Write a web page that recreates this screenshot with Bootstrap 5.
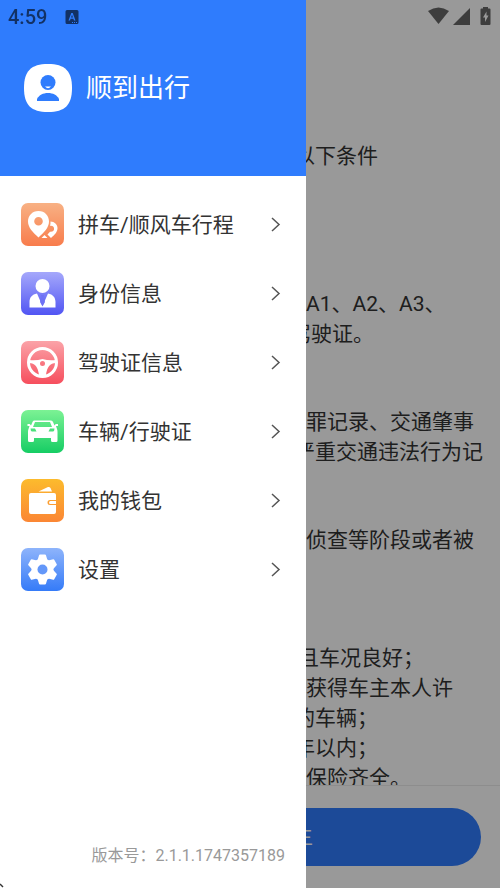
<!DOCTYPE html>
<html lang="zh-CN">
<head>
<meta charset="utf-8">
<meta name="viewport" content="width=device-width, initial-scale=1">
<title>顺到出行</title>
<link href="https://cdn.jsdelivr.net/npm/bootstrap@5.3.0/dist/css/bootstrap.min.css" rel="stylesheet">
<style>
:root { --drawer: 61.2vw; --brand: #2f7cfd; }
body { font-family: Roboto, "Noto Sans CJK SC", sans-serif; color: #333; background: #fff; }
.terms { padding: 141px 0 0 var(--drawer); font-size: 21px; line-height: 30px; }
.terms p, .terms h1 { margin: 0; font-size: 21px; line-height: 30px; font-weight: 400; white-space: nowrap; color: #333; }
.gap-title { margin-top: 118px; }
.gap-block { margin-top: 58px; }
.gap-group { margin-top: 88px; }
.under-8 { text-indent: -8px; }
.under-12 { text-indent: -12px; }
.under-16 { text-indent: -16px; }
.apply-bar { padding: 22px 19px; border-top: 1px solid #ebebeb; background: #fff; }
.apply-btn { height: 58px; font-size: 21px; color: #fff; background: var(--brand); }
.shade { background: rgba(0,0,0,.4); z-index: 10; }
.drawer { width: var(--drawer); z-index: 20; }
.profile { height: 176px; padding: 0 24px; gap: 14px; background: var(--brand); color: #fff; }
.avatar { width: 48px; height: 48px; }
.profile-name { font-size: 26px; line-height: 40px; font-weight: 400; }
.menu-list { padding-top: 14px; }
.menu-link { height: 69px; padding: 0 24px 0 21px; gap: 14px; color: #333; font-size: 21px; line-height: 30px; }
.menu-icon { width: 43px; height: 43px; }
.version { padding: 0 21px 20px; font-size: 16px; line-height: 24px; color: #999; }
.status { z-index: 30; height: 34px; padding: 0 8px; opacity: .6; color: #000; font-size: 20px; line-height: 34px; font-weight: 500; pointer-events: none; }
.corner { z-index: 30; }
</style>
<script src="https://cdn.jsdelivr.net/npm/bootstrap@5.3.0/dist/js/bootstrap.bundle.min.js"></script>
</head>
<body class="vh-100 overflow-hidden">
<div class="d-flex flex-column h-100">
  <main class="terms flex-grow-1 overflow-hidden">
    <h1 class="under-12">以下条件</h1>
    <section class="gap-title">
      <p>A1、A2、A3、</p>
      <p class="under-16">驾驶证。</p>
    </section>
    <section class="gap-block">
      <p>罪记录、交通肇事</p>
      <p class="under-12">严重交通违法行为记</p>
    </section>
    <section class="gap-block">
      <p>侦查等阶段或者被</p>
    </section>
    <section class="gap-group">
      <p class="under-8">且车况良好；</p>
      <p>获得车主本人许</p>
      <p class="under-12">的车辆；</p>
      <p class="under-12">年以内；</p>
      <p>保险齐全。</p>
    </section>
  </main>
  <footer class="apply-bar">
    <button type="button" class="apply-btn btn rounded-pill w-100 border-0">注册成为车主</button>
  </footer>
</div>

<div class="shade position-fixed top-0 start-0 w-100 h-100"></div>

<aside class="drawer position-fixed top-0 start-0 h-100 bg-white d-flex flex-column">
  <header class="profile d-flex align-items-center">
    <svg class="avatar flex-shrink-0" viewBox="0 0 48 48" aria-hidden="true">
      <path fill="#fff" d="M24 0C41 0 48 7 48 24S41 48 24 48 0 41 0 24 7 0 24 0Z"/>
      <circle cx="24" cy="18.500" r="7.500" fill="#2f7cfd"/>
      <path d="M21 22.500h6q-3 3.500-6 0Z" fill="#fff"/>
      <path fill="#2f7cfd" d="M13 37v-2c2-4 6-6 11-6s9 2 11 6v2Z"/>
    </svg>
    <span class="profile-name text-nowrap">顺到出行</span>
  </header>
  <nav class="menu-list flex-grow-1" aria-label="主菜单">
    <a href="#trips" class="menu-link d-flex align-items-center text-decoration-none">
      <svg class="menu-icon flex-shrink-0" viewBox="0 0 43 43" aria-hidden="true">
        <defs><linearGradient id="g1" x2="0" y2="1"><stop stop-color="#f8b184"/><stop offset="1" stop-color="#f87c4c"/></linearGradient></defs>
        <rect width="43" height="43" rx="7" fill="url(#g1)"/>
        <path fill="#fff" fill-rule="evenodd" d="M17.500 8C11 8 7 13 7 18.500c0 6 5 11 10.500 16 5.500-5 10.500-10 10.500-16C28 13 24 8 17.500 8Zm0 6a4.300 4.300 0 1 1 0 8.600 4.300 4.300 0 0 1 0-8.600Z"/>
        <path fill="#fff" d="M29.500 18.500c4 0 7 3 7 6.500 0 4-3 7-6.500 10l-3.500-3.500 2.500-2.800c3 .3 4.500-1.500 4-3.700-.5-1.500-2-2.500-4-2 .5-1.500.6-3 .5-4.500Z"/>
        <path fill="#fff" d="M23.500 32l3 3H20.500Z"/>
      </svg>
      <span class="flex-grow-1 text-nowrap">拼车/顺风车行程</span>
      <svg width="12" height="16" viewBox="0 0 12 16" fill="none" stroke="#555" stroke-width="1.500" aria-hidden="true"><path d="M2 1l7 6.500-7 6.500"/></svg>
    </a>
    <a href="#identity" class="menu-link d-flex align-items-center text-decoration-none">
      <svg class="menu-icon flex-shrink-0" viewBox="0 0 43 43" aria-hidden="true">
        <defs><linearGradient id="g2" x2="0" y2="1"><stop stop-color="#a5a8fb"/><stop offset="1" stop-color="#5155f3"/></linearGradient></defs>
        <rect width="43" height="43" rx="7" fill="url(#g2)"/>
        <circle cx="21.500" cy="14" r="7" fill="#fff"/>
        <path fill="#fff" d="M16 21.500L21.500 34 27 21.500c5 1 7.500 4 7.500 8.500v5.500h-26V30c0-4.500 2.500-7.500 7.500-8.500Z"/>
        <path fill="#6f72f5" d="M20 23h3l-.6 2.500L24 30l-2.500 4.500L19 30l1.600-4.500Z"/>
      </svg>
      <span class="flex-grow-1 text-nowrap">身份信息</span>
      <svg width="12" height="16" viewBox="0 0 12 16" fill="none" stroke="#555" stroke-width="1.500" aria-hidden="true"><path d="M2 1l7 6.500-7 6.500"/></svg>
    </a>
    <a href="#licence" class="menu-link d-flex align-items-center text-decoration-none">
      <svg class="menu-icon flex-shrink-0" viewBox="0 0 43 43" aria-hidden="true">
        <defs><linearGradient id="g3" x2="0" y2="1"><stop stop-color="#fba3a8"/><stop offset="1" stop-color="#f64e5d"/></linearGradient></defs>
        <rect width="43" height="43" rx="7" fill="url(#g3)"/>
        <circle cx="21.500" cy="21.500" r="14" fill="none" stroke="#fff" stroke-width="3"/>
        <path fill="#fff" fill-rule="evenodd" d="M8 19q7 1 13.500-1Q28 20 35 19v3c-6 0-9 4-10 12h-7C17 26 14 22 8 22Zm13.500 1a2.500 2.500 0 1 0 0 5 2.500 2.500 0 0 0 0-5Z"/>
      </svg>
      <span class="flex-grow-1 text-nowrap">驾驶证信息</span>
      <svg width="12" height="16" viewBox="0 0 12 16" fill="none" stroke="#555" stroke-width="1.500" aria-hidden="true"><path d="M2 1l7 6.500-7 6.500"/></svg>
    </a>
    <a href="#vehicle" class="menu-link d-flex align-items-center text-decoration-none">
      <svg class="menu-icon flex-shrink-0" viewBox="0 0 43 43" aria-hidden="true">
        <defs><linearGradient id="g4" x2="0" y2="1"><stop stop-color="#7cf294"/><stop offset="1" stop-color="#16cd64"/></linearGradient></defs>
        <rect width="43" height="43" rx="7" fill="url(#g4)"/>
        <path fill="#fff" fill-rule="evenodd" d="M13 10.500h17q1.500 0 2 1.500l1.500 3.500 1.200-1.500h2.300v2h-2l1 3q.5 1 .5 3v8.500q0 1.500-1.500 1.500H31.500q-1.500 0-1.500-1.500V28H13v2.500q0 1.500-1.500 1.500H8.500Q7 32 7 30.500V22q0-2 .5-3l1-3h-2v-2h2.300l1.200 1.500L11.500 12q.5-1.500 1.500-1.500Zm1 1.500L12 17h19l-2-5Z"/>
        <path fill="#4be07b" d="M9.500 18.500h4.500l1.500 3h-4.500Q9.500 21 9.500 18.500Zm24 0H29l-1.500 3H32q1.500-.5 1.500-3Z"/>
      </svg>
      <span class="flex-grow-1 text-nowrap">车辆/行驶证</span>
      <svg width="12" height="16" viewBox="0 0 12 16" fill="none" stroke="#555" stroke-width="1.500" aria-hidden="true"><path d="M2 1l7 6.500-7 6.500"/></svg>
    </a>
    <a href="#wallet" class="menu-link d-flex align-items-center text-decoration-none">
      <svg class="menu-icon flex-shrink-0" viewBox="0 0 43 43" aria-hidden="true">
        <defs><linearGradient id="g5" x2="0" y2="1"><stop stop-color="#fcbb2d"/><stop offset="1" stop-color="#fb8634"/></linearGradient></defs>
        <rect width="43" height="43" rx="7" fill="url(#g5)"/>
        <path fill="#fff" d="M17.500 12.500L27 8q1.500-.5 2.500 1l1.500 3.500ZM10 14h23q2 0 2 2v5h-6q-2.500 0-2.500 2.500T29 26h6v7q0 2-2 2H10q-2 0-2-2V16q0-2 2-2Z"/>
        <path fill="#fff" d="M29.500 22H35v3h-5.500q-1.500 0-1.500-1.500t1.500-1.500Z"/>
      </svg>
      <span class="flex-grow-1 text-nowrap">我的钱包</span>
      <svg width="12" height="16" viewBox="0 0 12 16" fill="none" stroke="#555" stroke-width="1.500" aria-hidden="true"><path d="M2 1l7 6.500-7 6.500"/></svg>
    </a>
    <a href="#settings" class="menu-link d-flex align-items-center text-decoration-none">
      <svg class="menu-icon flex-shrink-0" viewBox="0 0 43 43" aria-hidden="true">
        <defs><linearGradient id="g6" x2="0" y2="1"><stop stop-color="#8eb4fb"/><stop offset="1" stop-color="#357bf8"/></linearGradient></defs>
        <rect width="43" height="43" rx="7" fill="url(#g6)"/>
        <g fill="#fff" stroke="#fff" stroke-width="2" stroke-linejoin="round">
          <circle cx="21.500" cy="21.500" r="10"/>
          <path id="tooth" d="M17.500 12.500l1.500-5h5l1.500 5Z"/>
          <use href="#tooth" transform="rotate(60 21.500 21.500)"/><use href="#tooth" transform="rotate(120 21.500 21.500)"/><use href="#tooth" transform="rotate(180 21.500 21.500)"/><use href="#tooth" transform="rotate(240 21.500 21.500)"/><use href="#tooth" transform="rotate(300 21.500 21.500)"/>
        </g>
        <circle cx="21.500" cy="21.500" r="5" fill="#6397f9"/>
      </svg>
      <span class="flex-grow-1 text-nowrap">设置</span>
      <svg width="12" height="16" viewBox="0 0 12 16" fill="none" stroke="#555" stroke-width="1.500" aria-hidden="true"><path d="M2 1l7 6.500-7 6.500"/></svg>
    </a>
  </nav>
  <div class="version text-end text-nowrap">版本号：2.1.1.1747357189</div>
</aside>

<div class="status position-fixed top-0 start-0 w-100 d-flex align-items-center">
  <span>4:59</span>
  <svg class="ms-3" width="18" height="16" viewBox="0 0 18 16" aria-hidden="true">
    <path fill-rule="evenodd" d="M4 1h10q1.500 0 1.500 1.500v11Q15.500 15 14 15H4q-1.500 0-1.500-1.500v-11Q2.500 1 4 1Zm4.300 3L5.500 11.500H7l.6-1.700h2.800l.6 1.700h1.500L9.700 4ZM9 5.700l1 2.900H8ZM9 13v1h1v-1Zm2 0v1h1v-1Zm2 0v1h1v-1Z"/>
  </svg>
  <svg class="ms-auto" width="64" height="20" viewBox="0 0 64 20" aria-hidden="true">
    <path d="M0 4Q10.500-3 21 4L10.500 17Z"/>
    <path d="M42 1v17H25Z"/>
    <path fill-rule="evenodd" d="M55 0h5v1.500h1.500q1 0 1 1V17q0 1-1 1h-8q-1 0-1-1V2.500q0-1 1-1H55Zm3.500 4.500L55 10.500h2v4.500l3.500-6.500h-2Z"/>
  </svg>
</div>
<svg class="corner position-fixed bottom-0 start-0" width="5" height="5" viewBox="0 0 5 5" aria-hidden="true"><path d="M0 1l3 3" stroke="#333" stroke-width="1.500"/></svg>
</body>
</html>
